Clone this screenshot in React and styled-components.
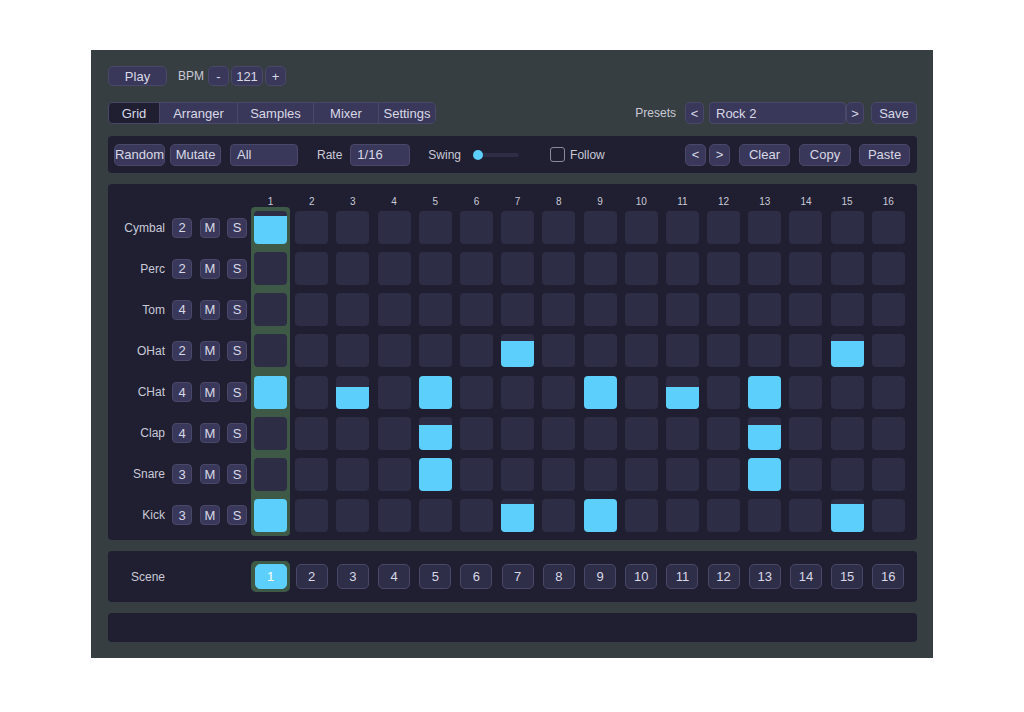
import React from "react";
import styled, { createGlobalStyle } from "styled-components";

const GlobalStyle = createGlobalStyle`
  html, body {
    margin: 0;
    padding: 0;
    background: #ffffff;
  }
  * {
    box-sizing: border-box;
  }
`;

const Frame = styled.div`
  width: 842px;
  height: 608px;
  margin: 50px 0 0 91px;
  padding: 16px 16px 16px 17px;
  background: #363e41;
  display: flex;
  flex-direction: column;
  font-family: "Liberation Sans", Arial, sans-serif;
  color: #d6d6e4;
`;

const Row = styled.div`
  display: flex;
  align-items: center;
  height: ${(p) => p.h}px;
  margin-bottom: ${(p) => p.mb || 0}px;
  justify-content: ${(p) => p.justify || "flex-start"};
`;

const Group = styled.div`
  display: flex;
  align-items: center;
  gap: ${(p) => p.gap || 0}px;
`;

const Button = styled.button`
  height: ${(p) => p.h || 22}px;
  width: ${(p) => p.w}px;
  padding: 0;
  margin-left: ${(p) => p.ml || 0}px;
  background: #3a385a;
  border: 1px solid #4a4869;
  border-radius: 5px;
  color: #d8d8e6;
  font-family: inherit;
  font-size: 13px;
  display: flex;
  align-items: center;
  justify-content: center;
`;

const Label = styled.span`
  font-size: 12px;
  color: #c9c9d7;
  margin-left: ${(p) => p.ml || 0}px;
  margin-right: ${(p) => p.mr || 0}px;
`;

const Field = styled.div`
  height: 22px;
  width: ${(p) => p.w}px;
  margin-left: ${(p) => p.ml || 0}px;
  background: #3a385a;
  border: 1px solid #4a4869;
  border-radius: 4px;
  font-size: 13px;
  color: #d8d8e6;
  display: flex;
  align-items: center;
  padding-left: 6px;
`;

const Tabs = styled.div`
  display: flex;
  height: 22px;
  border: 1px solid #4a4869;
  border-radius: 5px;
  overflow: hidden;
`;

const Tab = styled.div`
  width: ${(p) => p.w}px;
  display: flex;
  align-items: center;
  justify-content: center;
  font-size: 13px;
  color: #d8d8e6;
  background: ${(p) => (p.active ? "#1f1f31" : "#3a385a")};
  border-left: ${(p) => (p.first ? "none" : "1px solid #4a4869")};
`;

const Panel = styled.div`
  height: ${(p) => p.h}px;
  margin-bottom: ${(p) => p.mb || 0}px;
  background: #1f1f31;
  border-radius: 4px;
`;

const Toolbar = styled(Panel)`
  display: flex;
  align-items: center;
  padding: 0 7px 0 6px;
`;

const Slider = styled.div`
  width: 41px;
  height: 4px;
  margin-left: 17px;
  border-radius: 2px;
  background: #2e2d46;
  position: relative;
`;

const Thumb = styled.div`
  position: absolute;
  left: -5px;
  top: -3px;
  width: 10px;
  height: 10px;
  border-radius: 50%;
  background: #5dcffc;
`;

const CheckBox = styled.div`
  width: 15px;
  height: 15px;
  margin-left: 31px;
  margin-right: 5px;
  border: 1px solid #8a8a9c;
  border-radius: 3px;
`;

const Spacer = styled.div`
  flex: 1;
`;

const GridPanel = styled(Panel)`
  display: flex;
  padding: 10px 0 4px 0;
`;

const TrackColumn = styled.div`
  width: 143px;
  padding-top: 17px;
  display: flex;
  flex-direction: column;
  gap: 8.14px;
`;

const TrackRow = styled.div`
  height: 33px;
  display: flex;
  align-items: center;
`;

const TrackName = styled.div`
  width: 57px;
  text-align: right;
  font-size: 12px;
  color: #c9c9d7;
  margin-right: 7px;
`;

const SmallBtn = styled.div`
  width: 20px;
  height: 20px;
  margin-right: ${(p) => p.mr || 0}px;
  background: #3a385a;
  border: 1px solid #4a4869;
  border-radius: 4px;
  font-size: 13px;
  color: #d8d8e6;
  display: flex;
  align-items: center;
  justify-content: center;
`;

const Steps = styled.div`
  display: flex;
  gap: 2.2px;
`;

const StepColumn = styled.div`
  width: 39px;
  display: flex;
  flex-direction: column;
`;

const StepNum = styled.div`
  height: 13px;
  font-size: 10px;
  color: #c9c9d7;
  text-align: center;
  line-height: 15px;
`;

const CellStack = styled.div`
  padding: 4px 3px;
  border-radius: 4px;
  background: ${(p) => (p.current ? "#3e5a47" : "transparent")};
  display: flex;
  flex-direction: column;
  gap: 8.14px;
`;

const Cell = styled.div`
  height: 33px;
  border-radius: 4px;
  background: #2e2d46;
  overflow: hidden;
  display: flex;
  flex-direction: column;
  justify-content: flex-end;
`;

const Fill = styled.div`
  background: #5dcffc;
  width: 100%;
`;

const ScenePanel = styled(Panel)`
  display: flex;
  align-items: center;
`;

const SceneLabel = styled.div`
  width: 143px;
  padding-left: 23px;
  font-size: 12px;
  color: #c9c9d7;
`;

const SceneSlot = styled.div`
  width: 39px;
  height: 31px;
  padding: 3px;
  border-radius: 5px;
  background: ${(p) => (p.active ? "#3e5a47" : "transparent")};
  display: flex;
  justify-content: center;
`;

const SceneBtn = styled.div`
  width: 32px;
  height: 25px;
  border-radius: 5px;
  background: ${(p) => (p.active ? "#5dcffc" : "#2f2e48")};
  border: 1px solid ${(p) => (p.active ? "#5dcffc" : "#4a4869")};
  color: ${(p) => (p.active ? "#ffffff" : "#d8d8e6")};
  font-size: 13px;
  display: flex;
  align-items: center;
  justify-content: center;
`;

const tracks = [
  { name: "Cymbal", n: 2, hits: { 1: 85 } },
  { name: "Perc", n: 2, hits: {} },
  { name: "Tom", n: 4, hits: {} },
  { name: "OHat", n: 2, hits: { 7: 80, 15: 80 } },
  { name: "CHat", n: 4, hits: { 1: 100, 3: 66, 5: 100, 9: 100, 11: 66, 13: 100 } },
  { name: "Clap", n: 4, hits: { 5: 75, 13: 75 } },
  { name: "Snare", n: 3, hits: { 5: 100, 13: 100 } },
  { name: "Kick", n: 3, hits: { 1: 100, 7: 85, 9: 100, 15: 85 } },
];

const steps = Array.from({ length: 16 }, (_, i) => i + 1);

export default function App() {
  return (
    <>
      <GlobalStyle />
      <Frame>
        <Row h={20} mb={16}>
          <Button w={59} h={20}>Play</Button>
          <Label ml={11} mr={4}>BPM</Label>
          <Group gap={2}>
            <Button w={21} h={20}>-</Button>
            <Button w={32} h={20}>121</Button>
            <Button w={21} h={20}>+</Button>
          </Group>
        </Row>

        <Row h={22} mb={12} justify="space-between">
          <Tabs>
            <Tab w={50} active first>Grid</Tab>
            <Tab w={78}>Arranger</Tab>
            <Tab w={76}>Samples</Tab>
            <Tab w={65}>Mixer</Tab>
            <Tab w={57}>Settings</Tab>
          </Tabs>
          <Group>
            <Label mr={9}>Presets</Label>
            <Button w={19}>&lt;</Button>
            <Field w={137} ml={5}>Rock 2</Field>
            <Button w={18}>&gt;</Button>
            <Button w={46} ml={7}>Save</Button>
          </Group>
        </Row>

        <Toolbar h={37} mb={11}>
          <Button w={51}>Random</Button>
          <Button w={51} ml={5}>Mutate</Button>
          <Field w={68} ml={9}>All</Field>
          <Label ml={19}>Rate</Label>
          <Field w={60} ml={8}>1/16</Field>
          <Label ml={18}>Swing</Label>
          <Slider>
            <Thumb />
          </Slider>
          <CheckBox />
          <Label>Follow</Label>
          <Spacer />
          <Button w={21}>&lt;</Button>
          <Button w={21} ml={3}>&gt;</Button>
          <Button w={51} ml={9}>Clear</Button>
          <Button w={52} ml={9}>Copy</Button>
          <Button w={51} ml={8}>Paste</Button>
        </Toolbar>

        <GridPanel h={356} mb={11}>
          <TrackColumn>
            {tracks.map((t) => (
              <TrackRow key={t.name}>
                <TrackName>{t.name}</TrackName>
                <SmallBtn mr={8}>{t.n}</SmallBtn>
                <SmallBtn mr={7}>M</SmallBtn>
                <SmallBtn>S</SmallBtn>
              </TrackRow>
            ))}
          </TrackColumn>
          <Steps>
            {steps.map((s) => (
              <StepColumn key={s}>
                <StepNum>{s}</StepNum>
                <CellStack current={s === 1}>
                  {tracks.map((t) => (
                    <Cell key={t.name}>
                      {t.hits[s] ? <Fill style={{ height: `${t.hits[s]}%` }} /> : null}
                    </Cell>
                  ))}
                </CellStack>
              </StepColumn>
            ))}
          </Steps>
        </GridPanel>

        <ScenePanel h={51} mb={11}>
          <SceneLabel>Scene</SceneLabel>
          <Steps>
            {steps.map((s) => (
              <SceneSlot key={s} active={s === 1}>
                <SceneBtn active={s === 1}>{s}</SceneBtn>
              </SceneSlot>
            ))}
          </Steps>
        </ScenePanel>

        <Panel h={29} />
      </Frame>
    </>
  );
}
